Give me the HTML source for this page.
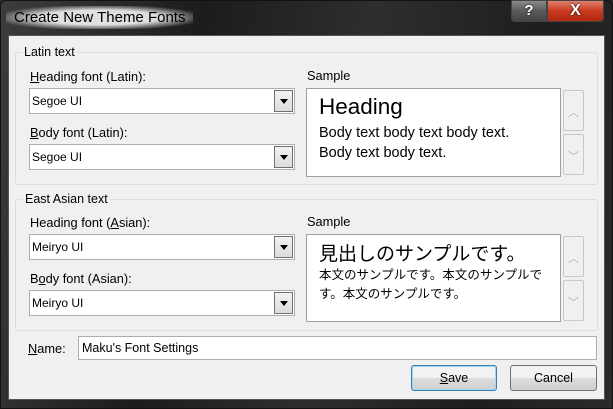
<!DOCTYPE html>
<html><head><meta charset="utf-8"><style>
*{box-sizing:border-box;margin:0;padding:0}
body{width:613px;height:409px;overflow:hidden;font-family:"Liberation Sans","Noto Sans CJK JP",sans-serif;font-size:12px;color:#000;position:relative;background:#2a2a2a}
.frame{position:absolute;left:0;top:0;width:613px;height:409px;background:linear-gradient(100deg,#3c3c3c 0%,#1c1c1c 30%,#2e2e2e 55%,#1e1e1e 80%,#2a2a2a 100%);border-radius:6px 6px 0 0;border:1px solid #111}
.title{position:absolute;left:6px;top:6px;font-size:15px;color:#000;padding:3px 8px;background:radial-gradient(ellipse at center,rgba(255,255,255,.85) 45%,rgba(255,255,255,0) 80%)}
.client{position:absolute;left:8px;top:35px;width:597px;height:365px;background:#f0f0f0;border:1px solid #555}
.abs{position:absolute}
.lbl{position:absolute;font-size:12.8px}
.grp{position:absolute;border:1px solid #d5dfe5;border-radius:3px}
.lg{position:absolute;background:#f0f0f0;padding:0 2px;font-size:12.5px}
.combo{position:absolute;width:266px;height:26px;background:#fff;border:1px solid #abadb3;font-size:12px;padding:5px 0 0 2px}
.combo .btn{position:absolute;right:1px;top:1px;width:19px;height:22px;border:1px solid #707070;background:linear-gradient(#f2f2f2,#dcdcdc)}
.combo .btn:after{content:"";position:absolute;left:5px;top:8px;border-left:4px solid transparent;border-right:4px solid transparent;border-top:5px solid #000}
.sample{position:absolute;width:255px;background:#fff;border:1px solid #a0a0a0}
.sb{position:absolute;width:21px;height:41px;border:1px solid #c8c8c8;border-radius:2px;background:#f0f0f0;color:#b0b0b0;text-align:center;font-size:11px}
u{text-decoration:underline}
.b{position:absolute;height:26px;border:1px solid #707070;border-radius:3px;background:linear-gradient(#f2f2f2 50%,#dddddd 50%,#cfcfcf);text-align:center;padding-top:5px;font-size:12.5px}
</style></head><body>
<div class="frame"></div>
<div class="title">Create New Theme Fonts</div>
<div class="abs" style="left:511px;top:0;width:36px;height:22px;border:1px solid #444;border-radius:0 0 0 4px;background:linear-gradient(#8a8a8a,#5a5a5a 50%,#444);color:#fff;font-weight:bold;font-size:15px;text-align:center;line-height:20px;text-shadow:0 0 2px #000">?</div>
<div class="abs" style="left:547px;top:0;width:57px;height:22px;border:1px solid #444;border-radius:0 0 4px 0;background:linear-gradient(#e08070,#c83a1e 50%,#b0280f);color:#fff;font-weight:bold;font-size:16px;text-align:center;line-height:20px;text-shadow:0 0 2px #000">X</div>
<div class="client"></div>

<div class="grp" style="left:15px;top:52px;width:583px;height:133px"></div>
<div class="lg" style="left:22px;top:45px">Latin text</div>
<div class="lbl" style="left:30px;top:69px"><u>H</u>eading font (Latin):</div>
<div class="combo" style="left:29px;top:88px">Segoe UI<div class="btn"></div></div>
<div class="lbl" style="left:30px;top:125px"><u>B</u>ody font (Latin):</div>
<div class="combo" style="left:29px;top:144px">Segoe UI<div class="btn"></div></div>
<div class="lbl" style="left:307px;top:68px">Sample</div>
<div class="sample" style="left:306px;top:88px;height:89px">
<div class="abs" style="left:12px;top:5px;font-size:22.5px">Heading</div>
<div class="abs" style="left:12px;top:34px;font-size:14.5px;line-height:20px;white-space:nowrap">Body text body text body text.<br>Body text body text.</div></div>
<div class="sb" style="left:563px;top:90px;padding-top:13px">︿</div>
<div class="sb" style="left:563px;top:134px;padding-top:13px">﹀</div>

<div class="grp" style="left:15px;top:199px;width:583px;height:132px"></div>
<div class="lg" style="left:23px;top:192px">East Asian text</div>
<div class="lbl" style="left:30px;top:215px">Heading font (<u>A</u>sian):</div>
<div class="combo" style="left:29px;top:234px">Meiryo UI<div class="btn"></div></div>
<div class="lbl" style="left:30px;top:271px">B<u>o</u>dy font (Asian):</div>
<div class="combo" style="left:29px;top:290px">Meiryo UI<div class="btn"></div></div>
<div class="lbl" style="left:307px;top:214px">Sample</div>
<div class="sample" style="left:306px;top:234px;height:88px">
<div class="abs" style="left:12px;top:4px;font-size:19px;white-space:nowrap">見出しのサンプルです。</div>
<div class="abs" style="left:12px;top:31px;font-size:12.5px;line-height:19px;width:235px">本文のサンプルです。本文のサンプルです。本文のサンプルです。</div></div>
<div class="sb" style="left:563px;top:236px;padding-top:13px">︿</div>
<div class="sb" style="left:563px;top:280px;padding-top:13px">﹀</div>

<div class="lbl" style="left:28px;top:341px"><u>N</u>ame:</div>
<div class="abs" style="left:78px;top:336px;width:519px;height:24px;background:#fff;border:1px solid #abadb3;padding:4px 0 0 3px;font-size:12.5px">Maku's Font Settings</div>
<div class="b" style="left:411px;top:365px;width:86px;border-color:#3c7fb1;box-shadow:inset 0 0 0 1px #9fd9f6"><u>S</u>ave</div>
<div class="b" style="left:510px;top:365px;width:87px">Cancel</div>
</body></html>
